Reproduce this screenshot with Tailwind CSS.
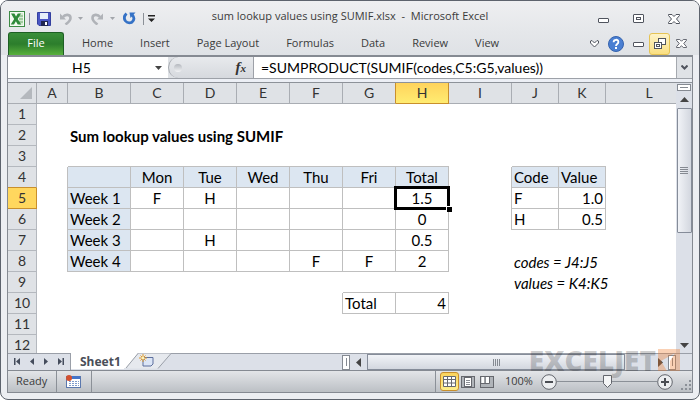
<!DOCTYPE html>
<html lang="en">
<head>
  <meta charset="UTF-8">
  <meta name="viewport" content="width=device-width, initial-scale=1.0">
  <title>sum lookup values using SUMIF.xlsx - Microsoft Excel</title>
  <script src="https://cdn.jsdelivr.net/npm/@tailwindcss/browser@4"></script>
</head>
<body class="bg-white h-screen overflow-hidden font-['Open_Sans',sans-serif] text-[11px] text-[#3b3b3b]">
<div class="relative h-full flex flex-col border border-[#5d636d] rounded-lg bg-[#eceef2] px-[6px] pb-[6px] overflow-hidden">

  <!-- Title bar -->
  <header class="h-[31px] shrink-0 grid grid-cols-[1fr_auto_1fr] items-center bg-linear-to-b from-[#eeeff1] to-[#e5e7ea] -mx-[6px] px-[8px]">
    <div class="flex items-center h-full pt-[4px]">
      <svg class="w-4 h-4" viewBox="0 0 16 16" aria-hidden="true">
        <rect x="0.5" y="0.5" width="15" height="15" fill="#f4faf2" stroke="#3d8b45"/>
        <path d="M10 2h4v12h-4z" fill="#d5ead2"/>
        <path d="M10 5h4M10 8h4M10 11h4" stroke="#6fae6e"/>
        <path d="M2 2.5h3.4L7 5.6l1.8-3.1H12L8.7 8l3.5 5.5H8.7L6.9 10.3 5 13.5H1.7L5.2 8z" fill="#2f8a3a"/>
      </svg>
      <span class="w-px h-3 bg-[#8b9097] ml-1 mr-[7px]"></span>
      <button aria-label="Save">
        <svg class="w-[14px] h-[14px]" viewBox="0 0 14 14">
          <path d="M0.5 0.5h13v13H2L0.5 12z" fill="#4a56c4" stroke="#34409f"/>
          <rect x="3" y="1" width="8" height="6" fill="#e6effa"/>
          <rect x="4" y="9" width="7" height="5" fill="#20264f"/>
          <rect x="8" y="10" width="2" height="3" fill="#fff"/>
        </svg>
      </button>
      <button aria-label="Undo" class="ml-[9px]">
        <svg class="w-[12px] h-[12px]" viewBox="0 0 12 12" fill="none" stroke="#b0b3b8">
          <path d="M3 4C5 1 10.5 1 10.5 5 10.5 8 8 9.5 5.5 11.5" stroke-width="2.6"/>
          <path d="M0 0.5v6h6z" fill="#b0b3b8" stroke="none"/>
        </svg>
      </button>
      <svg class="w-[5px] h-[3px] ml-[6px]" viewBox="0 0 5 3"><path d="M0 0h5L2.5 3z" fill="#a3a6ab"/></svg>
      <button aria-label="Redo" class="ml-[8px]">
        <svg class="w-[12px] h-[12px]" viewBox="0 0 12 12" fill="none" stroke="#b0b3b8">
          <path d="M9 4C7 1 1.5 1 1.5 5 1.5 8 4 9.5 6.5 11.5" stroke-width="2.6"/>
          <path d="M12 0.5v6H6z" fill="#b0b3b8" stroke="none"/>
        </svg>
      </button>
      <svg class="w-[5px] h-[3px] ml-[7px]" viewBox="0 0 5 3"><path d="M0 0h5L2.5 3z" fill="#a3a6ab"/></svg>
      <button aria-label="Repeat" class="ml-[8px]">
        <svg class="w-[13px] h-[13px]" viewBox="0 0 13 13" fill="none">
          <path d="M3.5 1.5C1 4 1 7 2.5 9c2 2.5 6 2.5 7.5 0 1.5-2 1-4-0.5-6" stroke="#3572c6" stroke-width="2.8"/>
          <path d="M6.5 0.5h6L7.5 6z" fill="#3572c6"/>
        </svg>
      </button>
      <span class="w-px h-3 bg-[#8b9097] ml-[7px] mr-[4px]"></span>
      <button aria-label="Customize toolbar">
        <svg class="w-[7px] h-[7px]" viewBox="0 0 7 7"><path d="M0 0h7v1.5H0zM0 3.5h7L3.5 7z" fill="#222"/></svg>
      </button>
    </div>
    <h1 class="whitespace-pre">sum lookup values using SUMIF.xlsx  -  Microsoft Excel</h1>
    <div class="flex items-center justify-end gap-6 h-full pt-[4px] pr-[11px]">
      <button aria-label="Minimize"><svg class="w-[11px] h-[11px]" viewBox="0 0 11 11"><rect x="0.5" y="5.5" width="10" height="4" rx="0.5" fill="#fff" stroke="#50545e"/></svg></button>
      <button aria-label="Maximize"><svg class="w-[11px] h-[9px]" viewBox="0 0 11 9" fill="#fff" stroke="#50545e"><rect x="0.5" y="0.5" width="10" height="8" rx="0.5"/><rect x="3.5" y="3.5" width="4" height="2"/></svg></button>
      <button aria-label="Close"><svg class="w-[12px] h-[10px]" viewBox="0 0 12 10"><path d="M0.5 0.5h3.5L6 2.5l2-2h3.5v1L8.5 5l3 3.5v1H8l-2-2-2 2H0.5v-1L3.5 5l-3-3.5z" fill="#fff" stroke="#50545e"/></svg></button>
    </div>
  </header>

  <!-- Ribbon tabs -->
  <nav class="h-[23px] shrink-0 flex items-center justify-between bg-linear-to-b from-[#e5e7ea] to-[#dfe2e6] -mx-[6px] pl-[7px] pr-3">
    <div class="flex h-full items-center gap-[27px]">
      <button class="h-full w-14 pb-px rounded-t-[3px] border border-b-0 border-[#1d5f24] bg-linear-to-b from-[#3a8f3a] via-[#2c7d2c] to-[#58b03c] text-white -mr-[9px]">File</button>
      <button>Home</button>
      <button>Insert</button>
      <button>Page Layout</button>
      <button>Formulas</button>
      <button>Data</button>
      <button>Review</button>
      <button>View</button>
    </div>
    <div class="flex items-center">
      <button aria-label="Minimize ribbon"><svg class="w-[9px] h-[8px]" viewBox="0 0 9 8"><path d="M0.5 1v2l4 4 4-4V1L7 0.5 4.5 3 2 0.5z" fill="#fff" stroke="#50545e"/></svg></button>
      <button aria-label="Help" class="ml-[9px]">
        <svg class="w-4 h-4" viewBox="0 0 16 16"><circle cx="8" cy="8" r="7.5" fill="#4a7fd2" stroke="#3563ae"/><path d="M5.6 6.2C5.6 3 10.4 3 10.4 6c0 2-2.4 2-2.4 4" fill="none" stroke="#fff" stroke-width="1.8"/><rect x="7" y="11" width="2" height="2" fill="#fff"/></svg>
      </button>
      <button aria-label="Minimize workbook" class="ml-[9px]"><svg class="w-[11px] h-[6px]" viewBox="0 0 11 6"><rect x="0.5" y="1.5" width="10" height="4" rx="0.5" fill="#fff" stroke="#50545e"/></svg></button>
      <button aria-label="Restore workbook" class="ml-[5px] w-[21px] h-[22px] grid place-items-center rounded-[3px] border border-[#e5c354] bg-linear-to-b from-[#fdf3c8] to-[#fadf80]">
        <svg class="w-[12px] h-[11px]" viewBox="0 0 12 11" fill="#fff" stroke="#50545e"><rect x="4.5" y="0.5" width="7" height="6"/><rect x="0.5" y="4.5" width="7" height="6"/><rect x="2.5" y="6.5" width="3" height="2"/></svg>
      </button>
      <button aria-label="Close workbook" class="ml-[6px]"><svg class="w-[11px] h-[9px]" viewBox="0 0 12 10"><path d="M0.5 0.5h3.5L6 2.5l2-2h3.5v1L8.5 5l3 3.5v1H8l-2-2-2 2H0.5v-1L3.5 5l-3-3.5z" fill="#fff" stroke="#50545e"/></svg></button>
    </div>
  </nav>

  <main class="flex-1 min-h-0 flex flex-col border border-t-2 border-[#858a92]">
    <!-- Formula bar -->
    <div class="h-[22px] shrink-0 flex border-b border-[#9da1a8] bg-[#dfe2e6] text-black font-[Lato,sans-serif] text-[14px]">
      <div class="w-[160px] flex items-center bg-white pr-[6px]">
        <input aria-label="Name box" value="H5" class="w-full min-w-0 text-center outline-none">
        <button aria-label="Name list"><svg class="w-[7px] h-[4px]" viewBox="0 0 7 4"><path d="M0 0h7L3.5 4z" fill="#444"/></svg></button>
      </div>
      <div class="w-[85px] flex items-center justify-between rounded-l-full border-l border-[#a5a9af] bg-linear-to-b from-[#e8eaed] to-[#d6d9de] pl-[5px] pr-[7px]">
        <span class="w-2 h-2 rounded-full bg-linear-to-b from-[#b4b8be] to-[#f3f4f6]"></span>
        <button aria-label="Insert function" class="font-['Liberation_Serif',serif] font-bold italic text-[15px] leading-4 text-[#333]">f<span class="text-[11px]">x</span></button>
      </div>
      <input aria-label="Formula" value="=SUMPRODUCT(SUMIF(codes,C5:G5,values))" class="flex-1 min-w-0 bg-white border-l border-[#9da1a8] pl-[7px] outline-none">
      <button aria-label="Expand formula bar" class="w-4 grid place-items-center border-l border-[#a5a9af] bg-[#dfe2e6]"><svg class="w-[7px] h-[5px]" viewBox="0 0 7 5"><path d="M0.5 0.5L3.5 3.5l3-3" fill="none" stroke="#50545e" stroke-width="2"/></svg></button>
    </div>
    <div class="h-[4px] shrink-0 bg-[#eceff5] border-b border-[#8d9299]"></div>

    <!-- Grid and vertical scrollbar -->
    <div class="flex-1 min-h-0 flex bg-white">
      <div class="flex-1 min-w-0 overflow-hidden">
        <table class="w-full table-fixed border-separate border-spacing-0 text-center text-black font-[Lato,sans-serif] text-[15px] leading-5 [&_tr]:h-[21px] [&_td]:p-0 [&_td]:h-[21px] [&_td]:border-[#bfbfbf] [&_tbody_th]:border-r [&_tbody_th]:border-b [&_tbody_th]:border-[#b4b8be] [&_tbody_th]:bg-[#dfe2e6] [&_th]:font-normal [&_th]:text-[14px] [&_th]:p-0 [&_th]:text-[#333]">
          <colgroup>
            <col class="w-[29px]"><col class="w-[31px]"><col class="w-[63px]"><col class="w-[53px]"><col class="w-[53px]"><col class="w-[53px]"><col class="w-[53px]"><col class="w-[53px]"><col class="w-[53px]"><col class="w-[63px]"><col class="w-[47px]"><col class="w-[47px]"><col>
          </colgroup>
          <thead class="[&_th]:border-r [&_th]:border-b [&_th]:border-[#a9adb3] [&_th]:bg-[#dfe2e6]">
            <tr>
              <th><svg class="w-[12px] h-[12px] ml-3" viewBox="0 0 12 12"><path d="M12 0v12H0z" fill="#b4b8bd"/></svg></th>
              <th>A</th><th>B</th><th>C</th><th>D</th><th>E</th><th>F</th>
              <th class="border-r-[#c98f2c]!">G</th>
              <th class="bg-linear-to-b from-[#ffd35c] to-[#ffec71] border-[#c98f2c]!">H</th>
              <th>I</th><th>J</th><th>K</th><th class="border-r-0! pl-4!">L</th>
            </tr>
          </thead>
          <tbody>
            <tr><th>1</th><td colspan="12"></td></tr>
            <tr><th>2</th><td></td><td colspan="11" class="text-left pl-[2px]! font-bold">Sum lookup values using SUMIF</td></tr>
            <tr><th>3</th><td></td><td colspan="7" class="border-b"></td><td></td><td colspan="2" class="border-b"></td><td></td></tr>
            <tr class="[&_td]:border-b">
              <th class="border-b-[#c98f2c]!">4</th>
              <td class="border-r border-b-0!"></td>
              <td class="border-r bg-[#dce6f1]"></td>
              <td class="border-r bg-[#dce6f1]">Mon</td>
              <td class="border-r bg-[#dce6f1]">Tue</td>
              <td class="border-r bg-[#dce6f1]">Wed</td>
              <td class="border-r bg-[#dce6f1]">Thu</td>
              <td class="border-r bg-[#dce6f1]">Fri</td>
              <td class="border-r bg-[#dce6f1]">Total</td>
              <td class="border-r border-b-0!"></td>
              <td class="border-r bg-[#dce6f1] text-left pl-[2px]!">Code</td>
              <td class="border-r bg-[#dce6f1] text-left pl-[2px]!">Value</td>
              <td class="border-b-0!"></td>
            </tr>
            <tr class="[&_td]:border-b">
              <th class="bg-[#ffd75e]! border-[#c98f2c]!">5</th>
              <td class="border-r border-b-0!"></td>
              <td class="border-r bg-[#dce6f1] text-left pl-[2px]!">Week 1</td>
              <td class="border-r">F</td>
              <td class="border-r">H</td>
              <td class="border-r"></td>
              <td class="border-r"></td>
              <td class="border-r"></td>
              <td class="border-r relative">1.5
                <span class="absolute -inset-[2px] border-[3px] border-black"></span>
                <span class="absolute -right-[4px] -bottom-[4px] w-[6px] h-[6px] bg-black border-t border-l border-white"></span>
              </td>
              <td class="border-r border-b-0!"></td>
              <td class="border-r text-left pl-[2px]!">F</td>
              <td class="border-r text-right pr-[2px]!">1.0</td>
              <td class="border-b-0!"></td>
            </tr>
            <tr class="[&_td]:border-b">
              <th>6</th>
              <td class="border-r border-b-0!"></td>
              <td class="border-r bg-[#dce6f1] text-left pl-[2px]!">Week 2</td>
              <td class="border-r"></td>
              <td class="border-r"></td>
              <td class="border-r"></td>
              <td class="border-r"></td>
              <td class="border-r"></td>
              <td class="border-r">0</td>
              <td class="border-r border-b-0!"></td>
              <td class="border-r text-left pl-[2px]!">H</td>
              <td class="border-r text-right pr-[2px]!">0.5</td>
              <td class="border-b-0!"></td>
            </tr>
            <tr class="[&_td]:border-b">
              <th>7</th>
              <td class="border-r border-b-0!"></td>
              <td class="border-r bg-[#dce6f1] text-left pl-[2px]!">Week 3</td>
              <td class="border-r"></td>
              <td class="border-r">H</td>
              <td class="border-r"></td>
              <td class="border-r"></td>
              <td class="border-r"></td>
              <td class="border-r">0.5</td>
              <td colspan="4" class="border-b-0!"></td>
            </tr>
            <tr class="[&_td]:border-b">
              <th>8</th>
              <td class="border-r border-b-0!"></td>
              <td class="border-r bg-[#dce6f1] text-left pl-[2px]!">Week 4</td>
              <td class="border-r"></td>
              <td class="border-r"></td>
              <td class="border-r"></td>
              <td class="border-r">F</td>
              <td class="border-r">F</td>
              <td class="border-r">2</td>
              <td class="border-b-0!"></td>
              <td colspan="3" class="border-b-0! text-left pl-[2px]! italic">codes = J4:J5</td>
            </tr>
            <tr><th>9</th><td colspan="6"></td><td colspan="2" class="border-b"></td><td></td><td colspan="3" class="text-left pl-[2px]! italic">values = K4:K5</td></tr>
            <tr>
              <th>10</th>
              <td colspan="6" class="border-r"></td>
              <td class="border-r border-b text-left pl-[2px]!">Total</td>
              <td class="border-r border-b text-right pr-[2px]!">4</td>
              <td colspan="4"></td>
            </tr>
            <tr><th>11</th><td colspan="12"></td></tr>
            <tr><th>12</th><td colspan="12"></td></tr>
          </tbody>
        </table>
      </div>
      <div class="w-4 shrink-0 flex flex-col items-center bg-[#dce0e8]">
        <span class="w-[14px] h-[7px] mt-px shrink-0 border border-[#858a92] bg-white grid place-items-center"><span class="w-2 h-px bg-[#858a92]"></span></span>
        <button aria-label="Scroll up" class="h-[17px] shrink-0"><svg class="w-[9px] h-[5px]" viewBox="0 0 9 5"><path d="M0 5h9L4.5 0z" fill="#444"/></svg></button>
        <span class="w-[15px] flex-1 max-h-[125px] grid place-items-center rounded-[1px] border border-[#858c99] bg-linear-to-r from-[#f1f3f7] to-[#d3d7df]">
          <svg class="w-2 h-[7px]" viewBox="0 0 8 7"><path d="M0 0.5h8M0 2.5h8M0 4.5h8M0 6.5h8" stroke="#858a92"/></svg>
        </span>
        <button aria-label="Scroll down" class="mt-auto h-4"><svg class="w-[9px] h-[5px]" viewBox="0 0 9 5"><path d="M0 0h9L4.5 5z" fill="#444"/></svg></button>
      </div>
    </div>

    <!-- Sheet tabs and horizontal scrollbar -->
    <div class="h-[17px] shrink-0 flex border-t border-[#9a9fa8] bg-[#dce0e8] pr-4">
      <div class="w-[63px] flex items-center justify-between px-[6px] pb-[2px] border-r border-[#9a9fa8]">
        <button aria-label="First sheet"><svg class="w-[7px] h-[7px]" viewBox="0 0 7 7"><path d="M0 0h1.5v7H0zM6 0v7L2 3.5z" fill="#444c5c"/></svg></button>
        <button aria-label="Previous sheet"><svg class="w-[4px] h-[7px]" viewBox="0 0 4 7"><path d="M4 0v7L0 3.5z" fill="#444c5c"/></svg></button>
        <button aria-label="Next sheet"><svg class="w-[4px] h-[7px]" viewBox="0 0 4 7"><path d="M0 0v7l4-3.5z" fill="#444c5c"/></svg></button>
        <button aria-label="Last sheet"><svg class="w-[7px] h-[7px]" viewBox="0 0 7 7"><path d="M5.5 0H7v7H5.5zM1 0v7l4-3.5z" fill="#444c5c"/></svg></button>
      </div>
      <button class="-mt-px h-4 bg-white pl-[9px] pr-[3px] font-['Noto_Sans',sans-serif] font-bold text-[12px] leading-[18px] text-[#4a4f59]">Sheet1</button>
      <button aria-label="Insert worksheet" class="-mt-px h-4 flex">
        <svg class="w-[50px] h-[16px]" viewBox="0 0 50 16">
          <path d="M0 0h14L2 15H0z" fill="#fff"/>
          <path d="M14 0.5L4 13q-1 2 1 2.5h29L47 0.5z" fill="#e6e9ee"/>
          <path d="M14 0.5L2 15M47 0.5L34 15.5" fill="none" stroke="#9a9fa8"/>
          <path d="M19 4.5h10v6.5l-2 2h-8z" fill="#dbe5f6" stroke="#5d6f9d"/>
          <path d="M19 1v8M15 5h8M16.5 2.5l5 5M21.5 2.5l-5 5" stroke="#e09a2b"/>
          <circle cx="19" cy="5" r="1.3" fill="#fff3b8"/>
        </svg>
      </button>
      <div class="ml-auto w-[334px] flex items-center">
        <span class="w-2 h-[15px] border border-[#858a92] bg-white grid place-items-center"><span class="w-px h-2 bg-[#858a92]"></span></span>
        <button aria-label="Scroll left" class="w-[17px] grid place-items-center"><svg class="w-[5px] h-[9px]" viewBox="0 0 5 9"><path d="M5 0v9L0 4.5z" fill="#444"/></svg></button>
        <span class="w-[258px] h-4 grid place-items-center border border-[#858c99] bg-linear-to-b from-[#f1f3f7] to-[#d3d7df]">
          <svg class="w-[7px] h-[7px]" viewBox="0 0 7 7"><path d="M0.5 0v7M2.5 0v7M4.5 0v7M6.5 0v7" stroke="#858a92"/></svg>
        </span>
        <button aria-label="Scroll right" class="ml-auto mr-[5px]"><svg class="w-[5px] h-[9px]" viewBox="0 0 5 9"><path d="M0 0v9l5-4.5z" fill="#444"/></svg></button>
        <span class="w-2 h-[15px] border border-[#858a92] bg-white grid place-items-center"><span class="w-px h-2 bg-[#858a92]"></span></span>
      </div>
    </div>

    <!-- Status bar -->
    <footer class="h-[22px] shrink-0 flex items-center border-t border-[#858a92] bg-linear-to-b from-[#e3e5e8] to-[#bcc0c5] pl-2">
      <span>Ready</span>
      <span class="w-px h-full bg-[#8b9097] ml-[9px] mr-[9px]"></span>
      <button aria-label="Record macro">
        <svg class="w-[15px] h-[13px]" viewBox="0 0 15 13">
          <rect x="0.5" y="1.5" width="14" height="11" fill="#fff" stroke="#5b78ae"/>
          <path d="M1 1h13v3H1z" fill="#4474c8"/>
          <path d="M3 6.5h10M3 8.5h10M3 10.5h10" stroke="#7f9ccc" stroke-dasharray="2 1"/>
          <circle cx="3" cy="3" r="3" fill="#d2502f"/>
        </svg>
      </button>
      <span class="w-px h-full bg-[#8b9097] ml-[10px]"></span>
      <div class="ml-auto flex items-center h-full">
        <span class="w-px h-full bg-[#8b9097] mr-1"></span>
        <button aria-label="Normal view" class="w-[19px] h-[19px] grid place-items-center rounded-[3px] border border-[#c98f2c] bg-linear-to-b from-[#fbd35c] to-[#fdee8c]"><svg class="w-[13px] h-[11px]" viewBox="0 0 13 11"><path d="M0.5 0.5h12v10H0.5zM0.5 3.5h12M0.5 7h12M4.5 0.5v10M8.5 0.5v10" fill="#fff" stroke="#66686e"/></svg></button>
        <button aria-label="Page layout view" class="ml-[2px]"><svg class="w-[14px] h-[12px]" viewBox="0 0 14 12"><rect x="0.5" y="0.5" width="13" height="11" fill="#b0b4b9" stroke="#66686e"/><rect x="3.5" y="1.5" width="7" height="9" fill="#fff" stroke="#66686e"/><path d="M5 4.5h4M5 6.5h4M5 8.5h4" stroke="#8b8e94"/></svg></button>
        <button aria-label="Page break preview" class="ml-[5px]"><svg class="w-[14px] h-[12px]" viewBox="0 0 14 12"><rect x="0.5" y="0.5" width="13" height="11" fill="#b0b4b9" stroke="#66686e"/><path d="M1.5 1h3v6h-3zM6 1h3v6H6z" fill="#fff"/><path d="M5 0.5v7M9.5 0.5v7M1 7.5h8.5" stroke="#66686e" fill="none"/></svg></button>
        <button class="ml-[11px] w-7 text-left">100%</button>
        <button aria-label="Zoom out" class="ml-2"><svg class="w-4 h-4" viewBox="0 0 16 16"><circle cx="8" cy="8" r="7.3" fill="#eceef0" stroke="#62656c"/><path d="M4 8h8" stroke="#4a4d53" stroke-width="2"/></svg></button>
        <input type="range" aria-label="Zoom" min="0" max="100" value="50" class="appearance-none w-[100px] h-4 bg-transparent bg-[linear-gradient(#8b9097,#8b9097)] bg-[length:100%_1px] bg-center bg-no-repeat [&::-webkit-slider-thumb]:appearance-none [&::-webkit-slider-thumb]:w-[9px] [&::-webkit-slider-thumb]:h-[13px] [&::-webkit-slider-thumb]:bg-[url(data:image/svg+xml,%3Csvg%20xmlns=%27http://www.w3.org/2000/svg%27%20viewBox=%270%200%209%2013%27%3E%3Cpath%20d=%27M.5%20.5h8v8l-4%204-4-4z%27%20fill=%27%23f4f5f6%27%20stroke=%27%2362656c%27/%3E%3C/svg%3E)]">
        <button aria-label="Zoom in"><svg class="w-4 h-4" viewBox="0 0 16 16"><circle cx="8" cy="8" r="7.3" fill="#eceef0" stroke="#62656c"/><path d="M4 8h8M8 4v8" stroke="#4a4d53" stroke-width="2"/></svg></button>
        <svg class="w-[11px] h-[11px] ml-2 mt-2" viewBox="0 0 11 11"><path d="M8 0h2v2H8zM4 4h2v2H4zM8 4h2v2H8zM0 8h2v2H0zM4 8h2v2H4zM8 8h2v2H8z" fill="#8b9097"/></svg>
      </div>
    </footer>
  </main>

  <!-- Watermark -->
  <div class="absolute right-[19px] bottom-[27px] flex items-center gap-[2px] pointer-events-none">
    <span class="font-extrabold text-[28px] leading-6 text-black/20">EXCELJET</span>
    <svg class="w-[22px] h-[22px]" viewBox="0 0 22 22"><path d="M0 0h22v22H12V12L17 4 3 12l6 10H0z" fill="#f07a2c" fill-opacity="0.35"/></svg>
  </div>
</div>
</body>
</html>
